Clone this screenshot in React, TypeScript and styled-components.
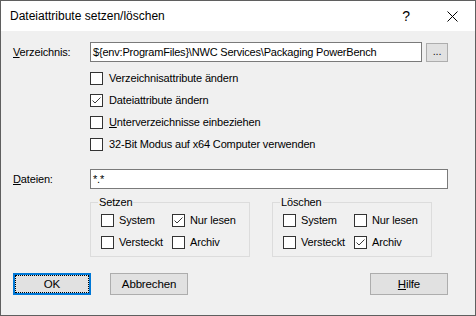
import React from "react";
import styled, { createGlobalStyle } from "styled-components";

const Global = createGlobalStyle`
  html, body { margin: 0; padding: 0; background: #ffffff; }
  #root { width: 476px; height: 316px; }
`;

const Window = styled.div`
  box-sizing: border-box;
  width: 476px;
  height: 316px;
  border: 1px solid #5f5f5f;
  display: flex;
  flex-direction: column;
  background: #f0f0f0;
  font-family: "Liberation Sans", Arial, sans-serif;
  font-size: 11px;
  letter-spacing: -0.15px;
  color: #000;
`;

const TitleBar = styled.div`
  flex: none;
  height: 30px;
  background: #ffffff;
  display: flex;
  align-items: center;
`;

const Title = styled.div`
  flex: 1;
  padding-left: 9px;
  font-size: 12px;
  letter-spacing: 0;
  color: #000;
`;

const CaptionButton = styled.div`
  width: 46px;
  height: 30px;
  display: flex;
  align-items: center;
  justify-content: center;
  font-size: 14px;
  color: #000;
`;

const Body = styled.div`
  flex: 1;
  display: flex;
  flex-direction: column;
  padding: 11px 27px 0 11px;
`;

const FieldRow = styled.div<{ $top: number }>`
  display: flex;
  align-items: center;
  margin-top: ${(p) => p.$top}px;
`;

const Label = styled.label`
  width: 78px;
  flex: none;
  padding-left: 1px;
  box-sizing: border-box;
`;

const Key = styled.span`
  text-decoration: underline;
`;

const TextInput = styled.div`
  flex: 1;
  height: 20px;
  box-sizing: border-box;
  border: 1px solid #7a7a7a;
  background: #ffffff;
  display: flex;
  align-items: center;
  padding-left: 2px;
  font-size: 11px;
  letter-spacing: -0.2px;
  white-space: nowrap;
  overflow: hidden;
`;

const BrowseButton = styled.div`
  flex: none;
  width: 22px;
  height: 19px;
  margin-left: 4px;
  box-sizing: border-box;
  border: 1px solid #adadad;
  background: #e1e1e1;
  display: flex;
  align-items: flex-end;
  justify-content: center;
  padding-bottom: 4px;
  font-size: 11px;
  color: #202020;
`;

const OptionList = styled.div`
  margin-left: 78px;
  margin-top: 5px;
  display: flex;
  flex-direction: column;
`;

const CheckRow = styled.div`
  height: 22px;
  display: flex;
  align-items: center;
  gap: 6px;
  white-space: nowrap;
`;

const Box = styled.span`
  flex: none;
  width: 13px;
  height: 13px;
  box-sizing: border-box;
  border: 1px solid #333333;
  background: #ffffff;
  display: flex;
  align-items: center;
  justify-content: center;
`;

const GroupRow = styled.div`
  display: flex;
  gap: 22px;
  margin-left: 78px;
  margin-top: 7px;
`;

const Group = styled.fieldset`
  margin: 0;
  width: 160px;
  box-sizing: border-box;
  border: 1px solid #dcdcdc;
  padding: 0 0 3px 10px;
  display: grid;
  grid-template-columns: 71px 1fr;
`;

const Legend = styled.legend`
  padding: 0 1px;
  margin-left: -3px;
  font-size: 11px;
  line-height: 13px;
`;

const GroupCell = styled(CheckRow)`
  gap: 5px;
`;

const ButtonRow = styled.div`
  display: flex;
  align-items: center;
  margin-top: 16px;
  padding-left: 1px;
`;

const Button = styled.div<{ $focused?: boolean; $gap?: number }>`
  width: 78px;
  height: 22px;
  box-sizing: border-box;
  margin-left: ${(p) => p.$gap ?? 0}px;
  border: ${(p) => (p.$focused ? "2px solid #0078d7" : "1px solid #adadad")};
  background: #e1e1e1;
  display: flex;
  align-items: center;
  justify-content: center;
  position: relative;
  font-size: 11.5px;
  &::after {
    content: "";
    display: ${(p) => (p.$focused ? "block" : "none")};
    position: absolute;
    inset: 0;
    border: 1px dotted #000;
  }
`;

const Spacer = styled.div`
  flex: 1;
`;

const CheckMark = () => (
  <svg width="11" height="11" viewBox="0 0 11 11">
    <polyline points="1.5,5.5 4,8 9.5,2.5" fill="none" stroke="#3c3c3c" strokeWidth="1" />
  </svg>
);

const Check: React.FC<{ checked?: boolean; children: React.ReactNode; inGroup?: boolean }> = ({
  checked,
  children,
  inGroup,
}) => {
  const Row = inGroup ? GroupCell : CheckRow;
  return (
    <Row>
      <Box>{checked && <CheckMark />}</Box>
      <span>{children}</span>
    </Row>
  );
};

const CloseIcon = () => (
  <svg width="11" height="11" viewBox="0 0 11 11">
    <path d="M0.5 0.5 L10.5 10.5 M10.5 0.5 L0.5 10.5" stroke="#000" strokeWidth="1" />
  </svg>
);

const AttrGroup: React.FC<{ title: string; nurLesen?: boolean; archiv?: boolean }> = ({
  title,
  nurLesen,
  archiv,
}) => (
  <Group>
    <Legend>{title}</Legend>
    <Check inGroup>System</Check>
    <Check inGroup checked={nurLesen}>Nur lesen</Check>
    <Check inGroup>Versteckt</Check>
    <Check inGroup checked={archiv}>Archiv</Check>
  </Group>
);

export default function App() {
  return (
    <>
      <Global />
      <Window>
        <TitleBar>
          <Title>Dateiattribute setzen/löschen</Title>
          <CaptionButton>?</CaptionButton>
          <CaptionButton>
            <CloseIcon />
          </CaptionButton>
        </TitleBar>
        <Body>
          <FieldRow $top={0}>
            <Label>
              <Key>V</Key>erzeichnis:
            </Label>
            <TextInput>{"${env:ProgramFiles}\\NWC Services\\Packaging PowerBench"}</TextInput>
            <BrowseButton>...</BrowseButton>
          </FieldRow>
          <OptionList>
            <Check>Verzeichnisattribute ändern</Check>
            <Check checked>Dateiattribute ändern</Check>
            <Check>
              <Key>U</Key>nterverzeichnisse einbeziehen
            </Check>
            <Check>32-Bit Modus auf x64 Computer verwenden</Check>
          </OptionList>
          <FieldRow $top={14}>
            <Label>
              <Key>D</Key>ateien:
            </Label>
            <TextInput>*.*</TextInput>
          </FieldRow>
          <GroupRow>
            <AttrGroup title="Setzen" nurLesen />
            <AttrGroup title="Löschen" archiv />
          </GroupRow>
          <ButtonRow>
            <Button $focused>OK</Button>
            <Button $gap={19}>Abbrechen</Button>
            <Spacer />
            <Button>
              <span>
                <Key>H</Key>ilfe
              </span>
            </Button>
          </ButtonRow>
        </Body>
      </Window>
    </>
  );
}
